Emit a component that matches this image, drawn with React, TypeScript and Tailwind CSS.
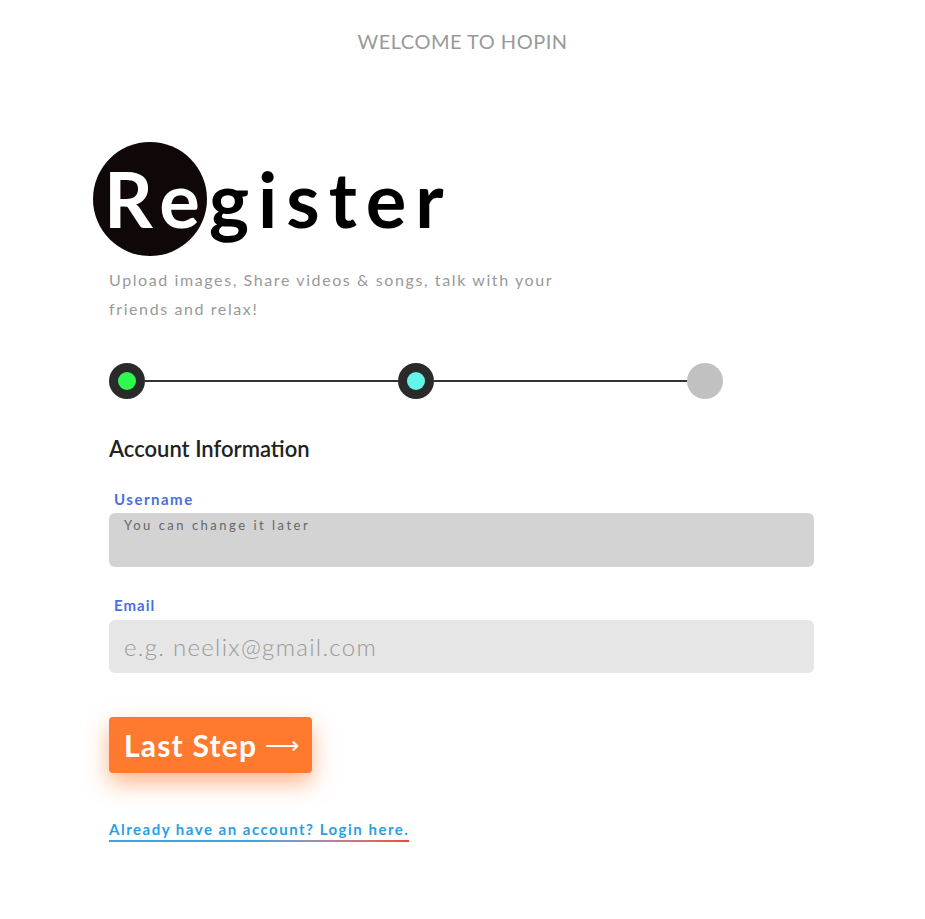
export default function App() {
  return (
    <div className="min-h-screen bg-white font-['Lato',sans-serif] text-[#222]">
      <p className="pt-[29px] text-center text-[20px] leading-6 tracking-[0.5px] text-[#999]">WELCOME TO HOPIN</p>

      <div className="pl-[109px] pr-[111px] pt-[89px]">
        {/* Title */}
        <div className="relative -ml-[16px] h-[114px] w-fit">
          <div className="absolute left-0 top-0 h-[114px] w-[114px] rounded-full bg-[#0f0708]" />
          <h1 className="relative pl-[11px] text-[76px] font-bold leading-[114px] tracking-[9px]">
            <span className="text-white">Re</span>
            <span className="text-black">gister</span>
          </h1>
        </div>

        <p className="mt-[9px] w-[470px] text-[16px] leading-[29px] tracking-[1.6px] text-[#999]">
          Upload images, Share videos &amp; songs, talk with your friends and relax!
        </p>

        {/* Steps */}
        <div className="mt-[40px] flex w-[614px] items-center">
          <div className="flex h-[36px] w-[36px] shrink-0 items-center justify-center rounded-full bg-[#2a2a2a]">
            <div className="h-[18px] w-[18px] rounded-full bg-[#2dfb50]" />
          </div>
          <div className="h-[2px] flex-1 bg-[#333]" />
          <div className="flex h-[36px] w-[36px] shrink-0 items-center justify-center rounded-full bg-[#2a2a2a]">
            <div className="h-[18px] w-[18px] rounded-full bg-[#62f7ea]" />
          </div>
          <div className="h-[2px] flex-1 bg-[#333]" />
          <div className="h-[36px] w-[36px] shrink-0 rounded-full bg-[#c1c1c1]" />
        </div>

        <h2 className="mt-[36px] text-[22px] font-semibold leading-7 text-[#222]">Account Information</h2>

        <label className="mt-[26px] block pl-[5px] text-[15px] font-bold leading-5 tracking-[1.5px] text-[#4a6fdc]">Username</label>
        <div className="mt-[4px] h-[54px] rounded-[6px] bg-[#d3d3d3] px-[15px] pt-[2px] text-[13px] leading-5 tracking-[2.5px] text-[#666]">
          You can change it later
        </div>

        <label className="mt-[28px] block pl-[5px] text-[15px] font-bold leading-5 tracking-[1px] text-[#4a6fdc]">Email</label>
        <div className="mt-[5px] flex h-[53px] items-center rounded-[6px] bg-[#e6e6e6] px-[15px] text-[24px] font-light tracking-[1.3px] text-[#999]">
          e.g. neelix@gmail.com
        </div>

        <button className="mt-[44px] flex h-[56px] items-center rounded-[4px] bg-[#ff7a2e] pl-[15px] pr-[12px] text-[30px] font-bold tracking-[1.2px] text-white shadow-[0_10px_22px_rgba(255,122,46,0.55)]">
          Last Step <span className="ml-[8px] text-[24px] font-normal">⟶</span>
        </button>

        <div className="mt-[46px] w-fit">
          <a className="block text-[15px] font-bold leading-5 tracking-[1.5px] text-[#2b9fe4]">Already have an account? Login here.</a>
          <div className="mt-[1px] h-[2px] bg-gradient-to-r from-[#3aa4e6] via-[#3aa4e6] to-[#f0443a]" />
        </div>
      </div>
    </div>
  );
}
